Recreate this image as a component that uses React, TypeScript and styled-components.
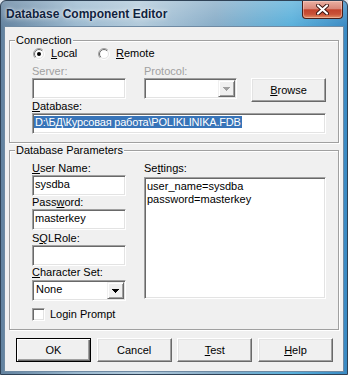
import React from "react";
import styled, { createGlobalStyle } from "styled-components";

const GlobalStyle = createGlobalStyle`
  html, body {
    margin: 0;
    padding: 0;
    background: #dfe6ee;
  }
  body {
    font-family: "Liberation Sans", Arial, sans-serif;
    font-size: 11px;
    color: #000;
  }
`;

const Window = styled.div`
  box-sizing: border-box;
  width: 348px;
  height: 375px;
  display: flex;
  flex-direction: column;
  border: 1px solid #2f4256;
  border-radius: 6px 6px 0 0;
  overflow: hidden;
  background:
    linear-gradient(180deg, rgba(255, 255, 255, 0.22) 0px, rgba(255, 255, 255, 0) 26px),
    linear-gradient(90deg, #62829f 0%, #9bb9cf 22%, #b2cadb 40%, #88adc8 62%, #59b0db 84%, #3a8ac3 100%);
`;

const TitleBar = styled.div`
  height: 26px;
  display: flex;
  justify-content: space-between;
  align-items: flex-start;
  padding-left: 5px;
`;

const Title = styled.div`
  font: bold 12px "Liberation Sans", Arial, sans-serif;
  line-height: 13px;
  padding-top: 7px;
  color: #10233f;
  text-shadow: 0 0 5px rgba(255, 255, 255, 0.85), 0 0 2px rgba(255, 255, 255, 0.6);
`;

const CloseButton = styled.div`
  box-sizing: border-box;
  width: 41px;
  height: 18px;
  margin-right: 4px;
  display: flex;
  align-items: center;
  justify-content: center;
  border: 1px solid #4a1f1a;
  border-top: none;
  border-radius: 0 0 4px 4px;
  background: linear-gradient(180deg, #eab0a2 0%, #d9887a 45%, #c3432c 52%, #c95238 78%, #e38f64 100%);
  box-shadow: inset 0 0 0 1px rgba(255, 220, 210, 0.45);
`;

const Client = styled.div`
  flex: 1;
  margin: 0 4px 3px;
  padding: 7px 4px 9px;
  display: flex;
  flex-direction: column;
  background: #f0f0f0;
  box-shadow: 0 0 0 1px #6f8aa3;
`;

const Group = styled.fieldset<{ $gap?: number }>`
  margin: ${(p) => p.$gap || 0}px 0 0;
  padding: 0;
  min-width: 0;
  border: 1px solid #a0a0a0;
  box-shadow: 1px 1px 0 #fff, inset 1px 1px 0 #fff;
`;

const Legend = styled.legend`
  margin-left: 5px;
  padding: 0 1px;
  line-height: 13px;
  background: #f0f0f0;
`;

const ConnectionBody = styled.div`
  display: grid;
  grid-template-columns: 112px 107px 75px;
  grid-template-areas:
    "radio radio radio"
    "slabel plabel ."
    "server proto browse"
    "dblabel dblabel browse"
    "db db db";
  padding: 0 12px 8px 22px;
`;

const Cell = styled.div<{ $area: string; $top?: number }>`
  grid-area: ${(p) => p.$area};
  margin-top: ${(p) => p.$top || 0}px;
  align-self: start;
`;

const RadioRow = styled.div`
  display: grid;
  grid-template-columns: 65px auto;
  height: 13px;
  margin-bottom: 5px;
`;

const RadioItem = styled.div`
  display: flex;
  align-items: center;
  gap: 6px;
  padding-left: 1px;
  line-height: 13px;
`;

const Label = styled.div<{ $disabled?: boolean; $top?: number }>`
  line-height: 13px;
  height: 13px;
  white-space: nowrap;
  margin-top: ${(p) => p.$top || 0}px;
  color: ${(p) => (p.$disabled ? "#a0a0a0" : "#000")};
`;

const Edit = styled.div<{ $width?: number; $top?: number }>`
  box-sizing: border-box;
  width: ${(p) => (p.$width ? `${p.$width}px` : "100%")};
  height: 21px;
  margin-top: ${(p) => p.$top || 0}px;
  padding: 2px 2px 0;
  line-height: 13px;
  white-space: nowrap;
  overflow: hidden;
  background: #fff;
  border: 1px solid;
  border-color: #a0a0a0 #fff #fff #a0a0a0;
  box-shadow: inset 1px 1px 0 #696969, inset -1px -1px 0 #e3e3e3;
`;

const Selection = styled.span`
  margin-left: -1px;
  padding: 0 1px;
  letter-spacing: -0.2px;
  background: #3874b8;
  color: #fff;
`;

const Combo = styled(Edit)`
  display: flex;
  padding: 1px;
`;

const ComboText = styled.div`
  flex: 1;
  padding: 1px 0 0 2px;
`;

const DropButton = styled.div`
  box-sizing: border-box;
  width: 17px;
  display: flex;
  align-items: center;
  justify-content: center;
  background: #f0f0f0;
  border: 1px solid;
  border-color: #f0f0f0 #696969 #696969 #f0f0f0;
  box-shadow: inset 1px 1px 0 #fff, inset -1px -1px 0 #a0a0a0;
`;

const Memo = styled(Edit)`
  height: 122px;
  padding: 2px 2px;
  white-space: pre;
`;

const Button = styled.div<{ $default?: boolean }>`
  box-sizing: border-box;
  width: 75px;
  height: 24px;
  display: flex;
  align-items: center;
  justify-content: center;
  line-height: 13px;
  background: #f0f0f0;
  border: 1px solid;
  border-color: ${(p) => (p.$default ? "#000" : "#fff #696969 #696969 #fff")};
  box-shadow: ${(p) =>
    p.$default
      ? "inset 1px 1px 0 #fff, inset -1px -1px 0 #696969, inset -2px -2px 0 #a0a0a0"
      : "inset -1px -1px 0 #a0a0a0, inset 1px 1px 0 #e3e3e3"};
`;

const ParamsBody = styled.div`
  display: grid;
  grid-template-columns: 94px 182px;
  column-gap: 18px;
  padding: 5px 12px 8px 22px;
`;

const Column = styled.div`
  display: flex;
  flex-direction: column;
`;

const CheckRow = styled.div`
  display: flex;
  align-items: center;
  gap: 5px;
  height: 13px;
  margin-top: 7px;
  line-height: 13px;
`;

const CheckBox = styled.div`
  box-sizing: border-box;
  width: 13px;
  height: 13px;
  background: #fff;
  border: 1px solid;
  border-color: #a0a0a0 #fff #fff #a0a0a0;
  box-shadow: inset 1px 1px 0 #696969, inset -1px -1px 0 #e3e3e3;
`;

const ButtonRow = styled.div`
  display: flex;
  justify-content: space-between;
  margin-top: 8px;
  padding: 0 6px 0 7px;
`;

const Arrow: React.FC<{ disabled?: boolean }> = ({ disabled }) => (
  <svg width="7" height="4" viewBox="0 0 7 4">
    <path
      d="M0 0h7v1h-1v1h-1v1h-1v1h-1v-1h-1v-1h-1v-1h-1z"
      fill={disabled ? "#a0a0a0" : "#000"}
    />
  </svg>
);

const Radio: React.FC<{ checked?: boolean }> = ({ checked }) => (
  <svg width="12" height="12" viewBox="0 0 12 12">
    <defs>
      <linearGradient id="ro" x1="0" y1="0" x2="1" y2="1">
        <stop offset="0.45" stopColor="#a0a0a0" />
        <stop offset="0.55" stopColor="#ffffff" />
      </linearGradient>
      <linearGradient id="ri" x1="0" y1="0" x2="1" y2="1">
        <stop offset="0.45" stopColor="#696969" />
        <stop offset="0.55" stopColor="#e3e3e3" />
      </linearGradient>
    </defs>
    <circle cx="6" cy="6" r="5.5" fill="none" stroke="url(#ro)" />
    <circle cx="6" cy="6" r="4.5" fill="#fff" stroke="url(#ri)" />
    {checked && <circle cx="6" cy="6" r="2" fill="#000" />}
  </svg>
);

const CloseGlyph = () => (
  <svg width="13" height="11" viewBox="0 0 13 11">
    <path
      d="M2 1.5 L11 9.5 M11 1.5 L2 9.5"
      stroke="#3a1410"
      strokeWidth="4"
      strokeLinecap="round"
    />
    <path d="M2 1.5 L11 9.5 M11 1.5 L2 9.5" stroke="#fff" strokeWidth="2.2" strokeLinecap="round" />
  </svg>
);

export default function App() {
  return (
    <>
      <GlobalStyle />
      <Window>
        <TitleBar>
          <Title>Database Component Editor</Title>
          <CloseButton>
            <CloseGlyph />
          </CloseButton>
        </TitleBar>
        <Client>
          <Group>
            <Legend>Connection</Legend>
            <ConnectionBody>
              <Cell $area="radio">
                <RadioRow>
                  <RadioItem>
                    <Radio checked />
                    <span>
                      <u>L</u>ocal
                    </span>
                  </RadioItem>
                  <RadioItem>
                    <Radio />
                    <span>
                      <u>R</u>emote
                    </span>
                  </RadioItem>
                </RadioRow>
              </Cell>
              <Cell $area="slabel">
                <Label $disabled>Server:</Label>
              </Cell>
              <Cell $area="plabel">
                <Label $disabled>Protocol:</Label>
              </Cell>
              <Cell $area="server">
                <Edit $width={94} />
              </Cell>
              <Cell $area="proto">
                <Combo $width={93}>
                  <ComboText />
                  <DropButton>
                    <Arrow disabled />
                  </DropButton>
                </Combo>
              </Cell>
              <Cell $area="browse">
                <Button>
                  <span>
                    <u>B</u>rowse
                  </span>
                </Button>
              </Cell>
              <Cell $area="dblabel" $top={1}>
                <Label>
                  <u>D</u>atabase:
                </Label>
              </Cell>
              <Cell $area="db">
                <Edit>
                  <Selection>D:\БД\Курсовая работа\POLIKLINIKA.FDB</Selection>
                </Edit>
              </Cell>
            </ConnectionBody>
          </Group>

          <Group $gap={1}>
            <Legend>Database Parameters</Legend>
            <ParamsBody>
              <Column>
                <Label>
                  <u>U</u>ser Name:
                </Label>
                <Edit>sysdba</Edit>
                <Label>
                  Pass<u>w</u>ord:
                </Label>
                <Edit>masterkey</Edit>
                <Label $top={2}>
                  S<u>Q</u>LRole:
                </Label>
                <Edit />
                <Label>
                  <u>C</u>haracter Set:
                </Label>
                <Combo $top={1}>
                  <ComboText>None</ComboText>
                  <DropButton>
                    <Arrow />
                  </DropButton>
                </Combo>
                <CheckRow>
                  <CheckBox />
                  <span>Login Prompt</span>
                </CheckRow>
              </Column>
              <Column>
                <Label>
                  Se<u>t</u>tings:
                </Label>
                <Memo $top={2}>{"user_name=sysdba\npassword=masterkey"}</Memo>
              </Column>
            </ParamsBody>
          </Group>

          <ButtonRow>
            <Button $default>OK</Button>
            <Button>Cancel</Button>
            <Button>
              <span>
                <u>T</u>est
              </span>
            </Button>
            <Button>
              <span>
                <u>H</u>elp
              </span>
            </Button>
          </ButtonRow>
        </Client>
      </Window>
    </>
  );
}
